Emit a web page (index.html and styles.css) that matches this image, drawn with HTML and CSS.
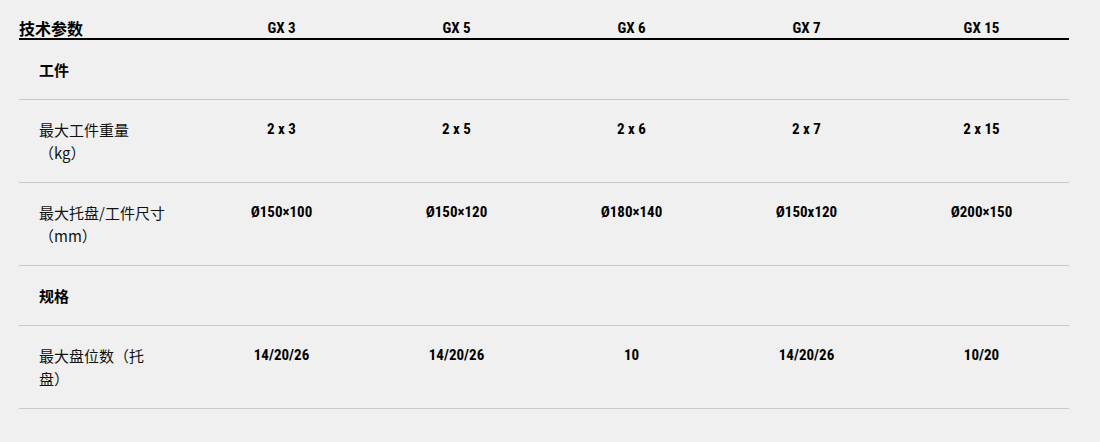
FILE: index.html
```html
<!DOCTYPE html>
<html lang="zh-CN">
<head>
<meta charset="utf-8">
<title>技术参数</title>
<link rel="stylesheet" href="styles.css">
</head>
<body>
<div class="specs">
  <div class="row head">
    <div class="title">技术参数</div>
    <div class="model">GX 3</div>
    <div class="model">GX 5</div>
    <div class="model">GX 6</div>
    <div class="model">GX 7</div>
    <div class="model">GX 15</div>
  </div>
  <div class="row section">
    <div class="label strong">工件</div>
  </div>
  <div class="row">
    <div class="label">最大工件重量（kg）</div>
    <div class="val">2 x 3</div>
    <div class="val">2 x 5</div>
    <div class="val">2 x 6</div>
    <div class="val">2 x 7</div>
    <div class="val">2 x 15</div>
  </div>
  <div class="row">
    <div class="label">最大托盘/工件尺寸（mm）</div>
    <div class="val">Ø150×100</div>
    <div class="val">Ø150×120</div>
    <div class="val">Ø180×140</div>
    <div class="val">Ø150x120</div>
    <div class="val">Ø200×150</div>
  </div>
  <div class="row section">
    <div class="label strong">规格</div>
  </div>
  <div class="row">
    <div class="label">最大盘位数（托盘）</div>
    <div class="val">14/20/26</div>
    <div class="val">14/20/26</div>
    <div class="val">10</div>
    <div class="val">14/20/26</div>
    <div class="val">10/20</div>
  </div>
</div>
</body>
</html>
```

FILE: styles.css
```css
html, body {
  margin: 0;
  padding: 0;
  background: #f0f0f0;
}
body {
  font-family: "Noto Sans CJK SC", "Liberation Sans", sans-serif;
  color: #111;
}
.specs {
  width: 1050px;
  margin: 16px 0 0 19px;
}
.row {
  display: grid;
  grid-template-columns: repeat(6, 175px);
  border-bottom: 1px solid #c9c9c9;
  padding: 18px 0;
  line-height: 23px;
}
.row.head {
  padding: 0;
  height: 22px;
  border-bottom: 2px solid #000;
  line-height: 22px;
  align-items: center;
}
.title {
  font-size: 16px;
  font-weight: 700;
  color: #000;
}
.model, .val {
  font-family: "Roboto Condensed", "Liberation Sans Narrow", "DejaVu Sans Condensed", "Liberation Sans", sans-serif;
  font-stretch: condensed;
  font-weight: 700;
  font-size: 15px;
  text-align: center;
  color: #000;
}
.model {
  padding-top: 1px;
}
.label {
  padding: 0 25px 0 20px;
  font-size: 15px;
  text-spacing-trim: space-all;
}
.label.strong {
  font-weight: 700;
  color: #000;
}
```
